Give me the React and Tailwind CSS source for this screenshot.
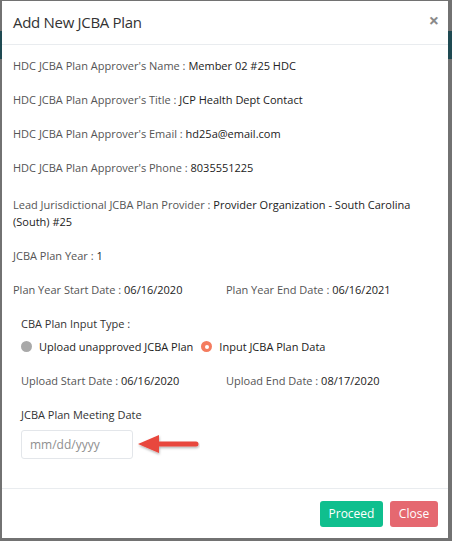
import React from "react";

function Row({ label, value, className = "" }) {
  return (
    <p className={"leading-[17px] " + className}>
      <span className="text-[#555]">{label} : </span>
      <span className="font-medium text-[#222]">{value}</span>
    </p>
  );
}

export default function App() {
  return (
    <div
      className="relative w-[452px] h-[541px] overflow-hidden bg-[#727272] pt-[1px] pl-[2px]"
      style={{ fontFamily: "'Open Sans', 'Noto Sans', sans-serif" }}
    >
      <div className="absolute left-0 right-0 top-[31px] h-[28px] bg-[#1f4a52]" />
      <div className="relative flex flex-col w-[446px] h-[537px] bg-white text-[11px]">
        <div className="flex items-center justify-between h-[44px] px-[11px] border-b border-[#e9ecef]">
          <h2 className="text-[15px] tracking-[-0.3px] text-[#333] font-normal">Add New JCBA Plan</h2>
          <span className="text-[18px] font-bold text-[#8a8a8a] leading-none mr-[-2px] mt-[-6px]">×</span>
        </div>
        <div className="flex-1 flex flex-col pt-[12px] px-[11px]">
          <Row label="HDC JCBA Plan Approver's Name" value="Member 02 #25 HDC" className="mb-[17px]" />
          <Row label="HDC JCBA Plan Approver's Title" value="JCP Health Dept Contact" className="mb-[17px]" />
          <Row label="HDC JCBA Plan Approver's Email" value="hd25a@email.com" className="mb-[17px]" />
          <Row label="HDC JCBA Plan Approver's Phone" value="8035551225" className="mb-[20px]" />
          <Row label="Lead Jurisdictional JCBA Plan Provider" value="Provider Organization - South Carolina (South) #25" className="mb-[17px] pr-[10px]" />
          <Row label="JCBA Plan Year" value="1" className="mb-[17px]" />
          <div className="flex mb-[17px]">
            <Row label="Plan Year Start Date" value="06/16/2020" className="w-[213px]" />
            <Row label="Plan Year End Date" value="06/16/2021" />
          </div>
          <div className="pl-[8px] flex flex-col">
            <p className="leading-[17px] text-[#333] mb-[6px]">CBA Plan Input Type :</p>
            <div className="flex items-center leading-[17px] text-[#222] font-medium mb-[17px]">
              <span className="w-[11px] h-[11px] rounded-full bg-[#a9a9a9] mr-[7px]" />
              <span className="mr-[8px]">Upload unapproved JCBA Plan</span>
              <span className="w-[11px] h-[11px] rounded-full bg-[#f47c5f] flex items-center justify-center mr-[7px]">
                <span className="w-[4px] h-[4px] rounded-full bg-white" />
              </span>
              <span>Input JCBA Plan Data</span>
            </div>
            <div className="flex mb-[17px]">
              <Row label="Upload Start Date" value="06/16/2020" className="w-[205px]" />
              <Row label="Upload End Date" value="08/17/2020" />
            </div>
            <p className="leading-[17px] text-[#333] mb-[7px]">JCBA Plan Meeting Date</p>
            <div className="flex items-center">
              <div className="w-[112px] h-[29px] border border-[#e3e6ea] rounded-[3px] flex items-center pl-[8px] text-[#8f8f8f] text-[12px]">
                mm/dd/yyyy
              </div>
              <svg width="66" height="24" viewBox="0 0 66 24" className="ml-[1px]">
                <defs>
                  <filter id="sh" x="-20%" y="-40%" width="140%" height="180%">
                    <feDropShadow dx="0.5" dy="1.5" stdDeviation="1" floodColor="#000" floodOpacity="0.3" />
                  </filter>
                </defs>
                <g filter="url(#sh)">
                  <line x1="22" y1="11" x2="62" y2="11" stroke="#e8463d" strokeWidth="5" strokeLinecap="round" />
                  <polygon points="4,11 25,2 25,20" fill="#e8463d" />
                </g>
              </svg>
            </div>
          </div>
        </div>
        <div className="flex justify-end items-start gap-[7px] h-[50px] pt-[12px] pr-[10px] border-t border-[#e9ecef]">
          <button className="h-[26px] w-[63px] rounded-[3px] bg-[#0fbf8e] text-white text-[12px]">Proceed</button>
          <button className="h-[26px] w-[48px] rounded-[3px] bg-[#e56870] text-white text-[12px]">Close</button>
        </div>
      </div>
    </div>
  );
}
